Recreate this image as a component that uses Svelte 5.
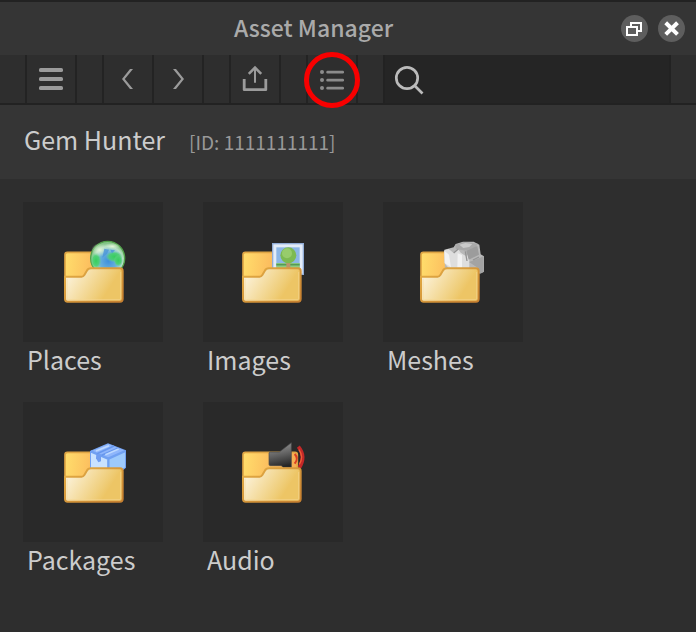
<script>
    let projectName = "Gem Hunter";
    let projectId = "1111111111";

    let search = $state("");
    let selected = $state("");

    // folderX is the left edge of the folder inside the thumbnail
    let folders = [
        { name: "Places", folderX: 123 },
        { name: "Images", folderX: 117 },
        { name: "Meshes", folderX: 111 },
        { name: "Packages", folderX: 123 },
        { name: "Audio", folderX: 117 }
    ];

    let shown = $derived(folders.filter((f) => f.name.toLowerCase().includes(search.toLowerCase())));
</script>

<div class="panel">
    <header class="title-bar">
        <h1>Asset Manager</h1>
        <button class="window-btn" aria-label="Undock">
            <svg viewBox="0 0 27 27" width="27" height="27">
                <path d="M10 11V8h10v8h-3M6 12h10v8H6z" fill="none" stroke="#fff" stroke-width="2" />
            </svg>
        </button>
        <button class="window-btn" aria-label="Close">
            <svg viewBox="0 0 27 27" width="27" height="27">
                <path d="M7.7 7.8l11.8 11.6M19.5 7.8L7.7 19.4" stroke="#fff" stroke-width="4" />
            </svg>
        </button>
    </header>

    <div class="toolbar">
        <div class="group">
            <button aria-label="Menu">
                <svg viewBox="0 0 24 24" width="24" height="24" fill="#9b9b9b">
                    <rect y="1" width="24" height="4" rx="1.6" />
                    <rect y="10" width="24" height="4" rx="1.6" />
                    <rect y="19" width="24" height="4" rx="1.6" />
                </svg>
            </button>
        </div>
        <div class="group">
            <button aria-label="Back">
                <svg viewBox="0 0 24 24" width="24" height="24" fill="#9b9b9b">
                    <path d="M14 2h3L8.8 12 17 22h-3L6 12z" />
                </svg>
            </button>
            <button aria-label="Forward">
                <svg viewBox="0 0 24 24" width="24" height="24" fill="#9b9b9b">
                    <path d="M10 2H7l8.2 10L7 22h3l8-10z" />
                </svg>
            </button>
        </div>
        <div class="group">
            <button aria-label="Import">
                <svg viewBox="0 0 28 28" width="28" height="28" fill="none" stroke="#9b9b9b">
                    <path d="M3.2 14v10.7h21.6V14" stroke-width="2.8" stroke-linejoin="round" />
                    <path d="M14 2.5v15.2" stroke-width="2" />
                    <path d="M7.8 8.8L14 2.6l6.2 6.2" stroke-width="2.6" />
                </svg>
            </button>
        </div>
        <div class="group">
            <button class="marked" aria-label="List view">
                <svg viewBox="0 0 24 24" width="24" height="24" fill="#8c8c8c">
                    {#each [5, 13, 21] as y}
                        <circle cx="2" cy={y} r="2" />
                        <rect x="6.3" y={y - 1.3} width="17.7" height="2.7" rx="1.2" />
                    {/each}
                </svg>
            </button>
        </div>
        <label class="search">
            <svg viewBox="0 0 32 32" width="32" height="32" fill="none" stroke="#bbb" stroke-width="2.7">
                <circle cx="13" cy="15" r="10.7" />
                <path d="M20.5 22.5l8 8" />
            </svg>
            <input type="text" aria-label="Search" bind:value={search} />
        </label>
    </div>

    <div class="project">
        <h2>{projectName}</h2>
        <span>[ID: {projectId}]</span>
    </div>

    <main class="folders">
        {#each shown as folder}
            <button class="folder" aria-pressed={selected === folder.name} onclick={() => (selected = folder.name)}>
                <svg class="thumb" viewBox="0 0 420 420" width="140" height="140" aria-hidden="true">
                    <defs>
                        <linearGradient id="back-{folder.name}" gradientUnits="userSpaceOnUse" x1="5" y1="30" x2="170" y2="50">
                            <stop offset="0" stop-color="#ffdc6b" />
                            <stop offset="0.45" stop-color="#fcbf5f" />
                            <stop offset="1" stop-color="#f5ab50" />
                        </linearGradient>
                        <linearGradient id="front-{folder.name}" gradientUnits="userSpaceOnUse" x1="5" y1="75" x2="115" y2="145">
                            <stop offset="0" stop-color="#fcf3dc" />
                            <stop offset="0.85" stop-color="#efcd78" />
                            <stop offset="1" stop-color="#edc565" />
                        </linearGradient>
                        <linearGradient id="edge-{folder.name}" x1="0" y1="0" x2="1" y2="1">
                            <stop offset="0" stop-color="#e3ad45" />
                            <stop offset="1" stop-color="#c78030" />
                        </linearGradient>
                    </defs>

                    <g transform="translate({folder.folderX} 148)">
                        <path d="M10 3H159q7 0 7 7V140H3V10q0-7 7-7z" fill="url(#back-{folder.name})" stroke="#dfa545" stroke-width="5" />
                    </g>

                    {#if folder.name === "Places"}
                        <defs>
                            <radialGradient id="globe" cx="0.52" cy="0.58" r="0.52">
                                <stop offset="0" stop-color="#3f8fdc" />
                                <stop offset="0.5" stop-color="#68b1dc" />
                                <stop offset="0.82" stop-color="#b6e0c6" />
                                <stop offset="1" stop-color="#84c487" />
                            </radialGradient>
                            <radialGradient id="land">
                                <stop offset="0" stop-color="#36cf5c" />
                                <stop offset="0.6" stop-color="#4bd070" stop-opacity="0.9" />
                                <stop offset="1" stop-color="#6bd08c" stop-opacity="0" />
                            </radialGradient>
                            <radialGradient id="shine">
                                <stop offset="0" stop-color="#e4f5d8" />
                                <stop offset="1" stop-color="#c4e6c3" stop-opacity="0" />
                            </radialGradient>
                        </defs>
                        <circle cx="254" cy="169" r="51" fill="url(#globe)" stroke="#52a14b" stroke-width="4" />
                        <ellipse cx="219" cy="176" rx="16" ry="26" fill="url(#land)" />
                        <ellipse cx="274" cy="164" rx="26" ry="17" fill="url(#land)" />
                        <ellipse cx="286" cy="176" rx="14" ry="18" fill="url(#land)" />
                        <ellipse cx="230" cy="144" rx="26" ry="21" fill="url(#shine)" />
                        <ellipse cx="268" cy="133" rx="24" ry="10" fill="url(#shine)" />
                        <path d="M244 140l14 3-6 12-14 12zM262 143l14 2-9 9z" fill="#4b95d8" opacity="0.8" />
                    {:else if folder.name === "Images"}
                        <rect x="209" y="125" width="92" height="92" fill="#e3ecf8" stroke="#92add7" stroke-width="4" />
                        <rect x="220" y="136" width="70" height="68" fill="#8cb6e6" />
                        <rect x="220" y="183" width="70" height="24" fill="#8ecb83" />
                        <path d="M220 188h70" stroke="#559b55" stroke-width="5" />
                        <rect x="250" y="174" width="12" height="26" fill="#bb956c" />
                        <circle cx="256" cy="160" r="24" fill="#7dba52" />
                        <circle cx="252" cy="154" r="15" fill="#97cc6c" />
                    {:else if folder.name === "Meshes"}
                        <path d="M184 143l28-7 6-10 22-7 32 0 17 9 4 29 10 6v46l-18 8-99-18z" fill="#b8b8b8" />
                        <path d="M184 145l13-4 14 11 14-12 8 12 14 9 12-3v40h-62l-13-15z" fill="#dedede" />
                        <path d="M184 146l14 12 6 38-18-12zM224 154l13 5v38h-14z" fill="#f2f2f2" />
                        <path d="M217 128l26-8 42 5-8 13-31 8-28-6z" fill="#a8a8a8" />
                        <path d="M229 128l18-5 21 3-9 9-18 3z" fill="#cacaca" />
                        <path d="M250 146l33-14 5 26-31 15z" fill="#9c9c9c" />
                        <path d="M258 180l34-13 10-5v48l-10 5-8-18z" fill="#a3a3a3" />
                        <path d="M212 153l14-12M247 148l5 29M270 174l18-9" stroke="#939393" stroke-width="4" />
                    {:else if folder.name === "Packages"}
                        <path d="M203 148l52-22 52 20v50l-8 7h-96z" fill="#b6d7fd" stroke="#71a1f2" stroke-width="4" />
                        <path d="M203 149l52-23 52 20-50 24z" fill="#8fb6fb" />
                        <path d="M257 171l48-22v49h-48z" fill="#9dcafc" />
                        <path d="M204 150l52 21v27h-52z" fill="#c9e2ff" />
                        <path d="M203 148l53 22 51-23M256 170v28" fill="none" stroke="#71a1f2" stroke-width="7" />
                        <path d="M222 155l51-23M236 160l50-22" stroke="#6797ee" stroke-width="5" />
                        <path d="M220 155l14 6v17l-8 3-7-12z" fill="#709df0" />
                        <path d="M219 147l39-16M247 158l40-17" stroke="#bcd8ff" stroke-width="5" />
                    {:else if folder.name === "Audio"}
                        <defs>
                            <linearGradient id="speaker" x1="0.3" y1="0" x2="0.5" y2="1">
                                <stop offset="0" stop-color="#999" />
                                <stop offset="0.5" stop-color="#626262" />
                                <stop offset="1" stop-color="#252525" />
                            </linearGradient>
                        </defs>
                        <path d="M202 150h27l36-28v74h-25l-5-5h-33q-4 0-4-4v-33q0-4 4-4z" fill="url(#speaker)" stroke="#484848" stroke-width="2" />
                        <path d="M275 156q13 13 0 29" fill="none" stroke="#d93e24" stroke-width="6" />
                        <path d="M286 134q24 29 3 63" fill="none" stroke="#c42828" stroke-width="11" />
                        <path d="M288 143q15 22 1 44" fill="none" stroke="#ef5b37" stroke-width="4" />
                    {/if}

                    <!-- front flap -->
                    <g transform="translate({folder.folderX} 148)">
                        <path
                            d="M3 76H53q5 0 8-5l7-12q4-8 13-8h87q8 0 8 8v84q0 8-8 8H11q-8 0-8-8z"
                            fill="url(#front-{folder.name})"
                            stroke="url(#edge-{folder.name})"
                            stroke-width="6"
                        />
                        <path d="M9 82v59q0 4 4 4h153q4 0 4-4V62" fill="none" stroke="#f6d996" stroke-width="3" opacity="0.6" />
                    </g>
                </svg>
                <span>{folder.name}</span>
            </button>
        {/each}
    </main>
</div>

<style>
    :global(body) {
        background: #2e2e2e;
    }

    .panel {
        min-height: 100vh;
        background: #2e2e2e;
        color: #ccc;
        font-family: "Noto Sans CJK SC", "Open Sans", sans-serif;
    }

    h1,
    h2 {
        margin: 0;
    }

    button {
        padding: 0;
        border: 0;
        background: none;
        color: inherit;
        font: inherit;
    }

    svg {
        display: block;
        flex: none;
    }

    .title-bar {
        display: flex;
        align-items: center;
        gap: 10px;
        height: 53px;
        padding: 0 11px 0 16px;
        border-top: 2px solid #222;
        background: #353535;
    }

    .title-bar h1 {
        flex: 1;
        padding-bottom: 4px;
        color: #aaa;
        font-size: 23px;
        font-weight: 500;
        line-height: 34px;
        text-align: center;
    }

    .window-btn {
        border-radius: 50%;
        background: #5e5e5e;
    }

    .toolbar {
        display: flex;
        gap: 25px;
        height: 48px;
        padding: 0 25px;
        border-bottom: 2px solid #222;
    }

    .group {
        display: flex;
        border-right: 2px solid #232323;
    }

    .group button {
        display: flex;
        align-items: center;
        justify-content: center;
        width: 50px;
        border-left: 2px solid #232323;
    }

    .marked {
        position: relative;
    }

    /* highlight ring over the list button */
    .marked::after {
        content: "";
        position: absolute;
        inset: -3px -4px -5px;
        border: 5px solid #f80000;
        border-radius: 50%;
    }

    .search {
        display: flex;
        flex: 1;
        align-items: center;
        gap: 8px;
        min-width: 0;
        padding: 0 9px;
        border: solid #222;
        border-width: 0 2px;
        background: #252525;
    }

    .search input {
        flex: 1;
        min-width: 0;
        border: 0;
        outline: 0;
        background: none;
        color: inherit;
        font: inherit;
        font-size: 19px;
    }

    .project {
        display: flex;
        align-items: baseline;
        gap: 24px;
        padding: 17px 24px 23px;
        background: #353535;
    }

    .project h2 {
        font-size: 25px;
        font-weight: 400;
        line-height: 34px;
    }

    .project span {
        color: #999;
        font-size: 19px;
        line-height: 24px;
    }

    .folders {
        display: grid;
        grid-template-columns: repeat(auto-fill, 140px);
        gap: 26px 40px;
        padding: 23px;
    }

    .folder {
        text-align: left;
    }

    .folder span {
        display: block;
        padding-left: 4px;
        font-size: 25px;
        line-height: 34px;
    }

    .thumb {
        background: #292929;
    }
</style>
